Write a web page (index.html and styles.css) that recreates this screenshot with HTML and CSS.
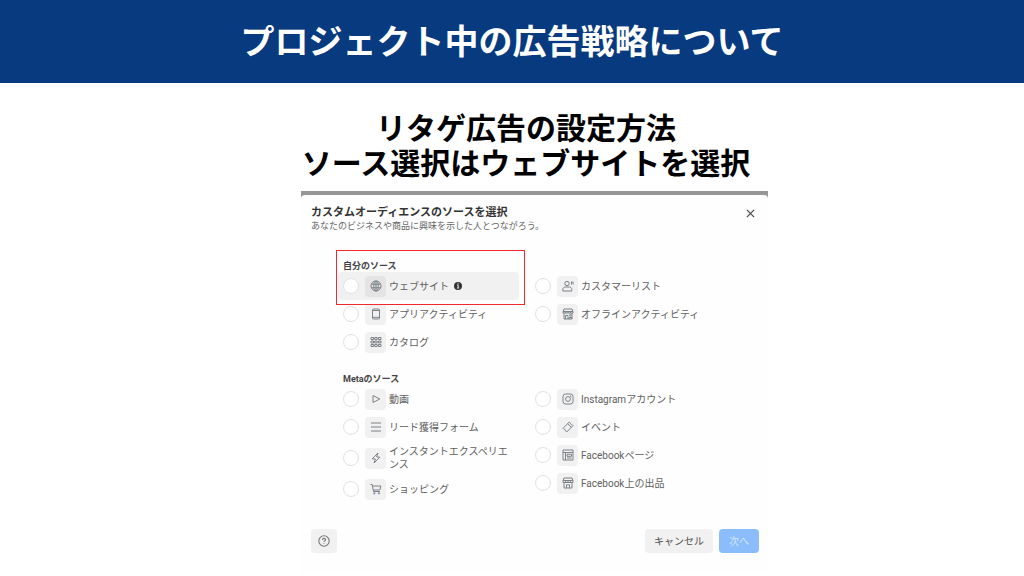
FILE: index.html
```html
<!DOCTYPE html>
<html lang="ja">
<head>
<meta charset="utf-8">
<meta name="viewport" content="width=device-width, initial-scale=1">
<title>プロジェクト中の広告戦略について</title>
<link rel="stylesheet" href="styles.css">
</head>
<body>
<header class="banner"><h1 class="banner-title">プロジェクト中の広告戦略について</h1></header>
<main>
  <h2 class="lead">リタゲ広告の設定方法<br>ソース選択はウェブサイトを選択</h2>
  <div class="stage">
    <div class="backdrop">
    <form class="dialog" aria-labelledby="dialog-title">
      <div class="dialog-head">
        <div>
          <h3 class="dialog-title" id="dialog-title">カスタムオーディエンスのソースを選択</h3>
          <p class="dialog-note">あなたのビジネスや商品に興味を示した人とつながろう。</p>
        </div>
        <button class="close" type="button" aria-label="閉じる"><svg class="close-icon" viewBox="0 0 10 10"><path d="M1 1l8 8M9 1L1 9"/></svg></button>
      </div>

      <div class="groups">
        <section class="group">
          <span class="frame" aria-hidden="true"></span>
          <h4 class="group-title">自分のソース</h4>
          <div class="columns">
            <div class="column">
              <label class="row row-active"><input class="radio" type="radio" name="source"><span class="tile"><svg class="icon" viewBox="0 0 14 14"><circle cx="7" cy="7" r="5"/><ellipse cx="7" cy="7" rx="2.2" ry="5"/><path d="M2.5 5.2h9M2.5 8.8h9M7 2v10"/></svg></span><span class="text">ウェブサイト</span><svg class="info" viewBox="0 0 8 8"><circle cx="4" cy="4" r="4" fill="#333"/><path d="M3.2 3.6h1v2.2M3 6h2.2" fill="none" stroke="#fff" stroke-width=".9"/><circle cx="4" cy="2" r=".7" fill="#fff"/></svg></label>
              <label class="row"><input class="radio" type="radio" name="source"><span class="tile"><svg class="icon" viewBox="0 0 14 14"><rect x="3.5" y="2" width="7" height="10" rx="1"/><path d="M3.5 3.5h7M3.5 10.3h7"/></svg></span><span class="text">アプリアクティビティ</span></label>
              <label class="row"><input class="radio" type="radio" name="source"><span class="tile"><svg class="icon" viewBox="0 0 14 14"><path d="M2 2.500h2.500v2H2zM5.700 2.500h2.500v2H5.700zM9.500 2.500H12v2H9.500zM2 6h2.500v2H2zM5.700 6h2.500v2H5.700zM9.500 6H12v2H9.500zM2 9.500h2.500v2H2zM5.700 9.500h2.500v2H5.700zM9.500 9.500H12v2H9.500z"/></svg></span><span class="text">カタログ</span></label>
            </div>
            <div class="column">
              <label class="row"><input class="radio" type="radio" name="source"><span class="tile"><svg class="icon" viewBox="0 0 14 14"><circle cx="6" cy="4.500" r="2.200"/><path d="M1.800 12v-1.500C1.800 9 3 8 4.300 8h4c1.500 0 2.500 1 2.500 2.500V12zM10.500 2.500v3M12 2.500v3"/></svg></span><span class="text">カスタマーリスト</span></label>
              <label class="row"><input class="radio" type="radio" name="source"><span class="tile"><svg class="icon" viewBox="0 0 14 14"><path d="M3 2h8l1 3v1H2V5zM2 4.500h10M4.700 4.500v1.500M7 4.500v1.500M9.300 4.500v1.500M3 6v6h8V6M4.500 12V8.500H7V12"/><circle cx="9.300" cy="8.300" r=".8"/><path d="M8.200 12v-1.500h2.500V12"/></svg></span><span class="text">オフラインアクティビティ</span></label>
            </div>
          </div>
        </section>

        <section class="group">
          <h4 class="group-title">Metaのソース</h4>
          <div class="columns">
            <div class="column">
              <label class="row"><input class="radio" type="radio" name="source"><span class="tile"><svg class="icon" viewBox="0 0 14 14"><path d="M4 3.500v7L10.800 7z"/></svg></span><span class="text">動画</span></label>
              <label class="row"><input class="radio" type="radio" name="source"><span class="tile"><svg class="icon" viewBox="0 0 14 14"><path d="M2 3h10M2 7h10M2 11h10"/></svg></span><span class="text">リード獲得フォーム</span></label>
              <label class="row"><input class="radio" type="radio" name="source"><span class="tile"><svg class="icon" viewBox="0 0 14 14"><path d="M9 2L3.200 7.800l3.200.2L5 12l5.800-5.800-3.200-.3z"/></svg></span><span class="text">インスタントエクスペリエンス</span></label>
              <label class="row"><input class="radio" type="radio" name="source"><span class="tile"><svg class="icon" viewBox="0 0 14 14"><path d="M1.500 2.500h1.700l1.300 7h6.300M3.500 4h8.300l-1 4H4.300"/><circle cx="5.300" cy="11.300" r=".7"/><circle cx="10" cy="11.300" r=".7"/></svg></span><span class="text">ショッピング</span></label>
            </div>
            <div class="column">
              <label class="row"><input class="radio" type="radio" name="source"><span class="tile"><svg class="icon" viewBox="0 0 14 14"><rect x="2" y="2" width="10" height="10" rx="2.500"/><circle cx="7" cy="7" r="2.400"/><circle cx="9.800" cy="4.200" r=".3"/></svg></span><span class="text">Instagramアカウント</span></label>
              <label class="row"><input class="radio" type="radio" name="source"><span class="tile"><svg class="icon" viewBox="0 0 14 14"><path d="M8.300 2l1.200 1.100c-.3.900.4 1.600 1.300 1.300L12 5.600 5.700 12l-1.200-1.200c.3-.9-.4-1.600-1.300-1.300L2 8.300zM6.700 3.800l3.600 3.500"/></svg></span><span class="text">イベント</span></label>
              <label class="row"><input class="radio" type="radio" name="source"><span class="tile"><svg class="icon" viewBox="0 0 14 14"><path d="M2 2h10v10H2zM2 4.500h10M4.500 4.500V12M6 6.300h4.500v2H6zM6 10h4.500"/></svg></span><span class="text">Facebookページ</span></label>
              <label class="row"><input class="radio" type="radio" name="source"><span class="tile"><svg class="icon" viewBox="0 0 14 14"><path d="M3 2h8l1 3v1.500H2V5zM2 4.500h10M4.700 4.500v2M7 4.500v2M9.300 4.500v2M3 6.500V12h8V6.500M5.500 12V8.800h3V12"/></svg></span><span class="text">Facebook上の出品</span></label>
            </div>
          </div>
        </section>
      </div>

      <div class="dialog-foot">
        <button class="button button-help" type="button" aria-label="ヘルプ"><svg class="help-icon" viewBox="0 0 12 12"><circle cx="6" cy="6" r="5.200"/><path d="M4.500 4.900c0-2 3-2 3 0 0 1-1.500 1-1.500 2.200M6 8.200v.9"/></svg></button>
        <button class="button button-cancel" type="button">キャンセル</button>
        <button class="button button-next" type="button">次へ</button>
      </div>
    </form>
    </div>
  </div>
</main>
</body>
</html>
```
FILE: styles.css
```css
* { box-sizing: border-box; }

body {
  margin: 0;
  background: #fff;
  color: #000;
  font-family: Roboto, "Noto Sans CJK JP", sans-serif;
}

h1, h2, h3, h4, p { margin: 0; }

.banner {
  padding: 21px 16px 19px;
  background: #073a7f;
  color: #fff;
  text-align: center;
}

.banner-title {
  font-size: 34px;
  line-height: 43px;
  font-weight: 700;
}

.lead {
  padding: 28px 0 10px 28px;
  font-size: 30px;
  line-height: 35px;
  font-weight: 700;
  text-align: center;
}

.stage {
  display: flex;
  justify-content: center;
  padding-left: 45px;
}

.backdrop {
  width: 100%;
  max-width: 467px;
  padding-top: 4px;
  background: #969696;
}

.dialog {
  padding: 11px 9px 20px 10px;
  border-radius: 4px 4px 0 0;
  background: #fefefe;
}

.dialog-head {
  display: flex;
  justify-content: space-between;
  align-items: flex-start;
}

.dialog-title {
  font-size: 11px;
  line-height: 14px;
  color: #333;
}

.dialog-note {
  font-size: 9px;
  line-height: 13px;
  color: #666;
}

.close {
  display: flex;
  padding: 3px 4px;
  border: 0;
  background: none;
}

.close-icon {
  width: 9px;
  height: 9px;
  fill: none;
  stroke: #444;
  stroke-width: 1.3;
}

.groups {
  display: grid;
  gap: 16px;
  padding: 26px 48px 26px 27px;
}

.group { position: relative; }

.frame {
  position: absolute;
  top: -9px;
  left: -2px;
  width: 189px;
  height: 55px;
  border: 1px solid #f5262c;
}

.group-title {
  padding: 1px 0 0 5px;
  font-size: 9px;
  line-height: 12px;
  color: #444;
}

.columns {
  display: grid;
  grid-template-columns: 1fr 1fr;
  gap: 11px;
}

.row {
  display: flex;
  align-items: center;
  min-height: 28px;
  padding: 4px 5px;
  border-radius: 4px;
  font-size: 10px;
  line-height: 13px;
  color: #606060;
}

.row-active { background: #f1f1f1; }

.radio {
  appearance: none;
  flex: none;
  width: 16px;
  height: 16px;
  margin: 0 6px 0 0;
  border: 1px solid #e2e2e2;
  border-radius: 50%;
  background: #fff;
}

.tile {
  display: flex;
  flex: none;
  align-items: center;
  justify-content: center;
  width: 21px;
  height: 21px;
  margin: -1px 3px -1px 0;
  border-radius: 4px;
  background: #f1f1f1;
}

.row-active .tile { background: #e4e4e4; }

.icon {
  width: 14px;
  height: 14px;
  fill: none;
  stroke: #7c8187;
  stroke-width: 1;
  stroke-linejoin: round;
}

.info {
  flex: none;
  width: 8px;
  height: 8px;
  margin-left: 5px;
}

.dialog-foot {
  display: flex;
  gap: 6px;
}

.button {
  display: flex;
  align-items: center;
  justify-content: center;
  height: 24px;
  padding: 0 10px;
  border: 0;
  border-radius: 4px;
  background: #f1f1f1;
  color: #505050;
  font-family: inherit;
  font-size: 10px;
  line-height: 13px;
}

.button-help {
  margin-right: auto;
  padding: 0 7px;
}

.button-cancel { padding: 0 9px; }

.button-next {
  background: #8bbcfb;
  color: #d3e6ff;
}

.help-icon {
  width: 12px;
  height: 12px;
  fill: none;
  stroke: #777;
  stroke-width: 1.1;
}
```
